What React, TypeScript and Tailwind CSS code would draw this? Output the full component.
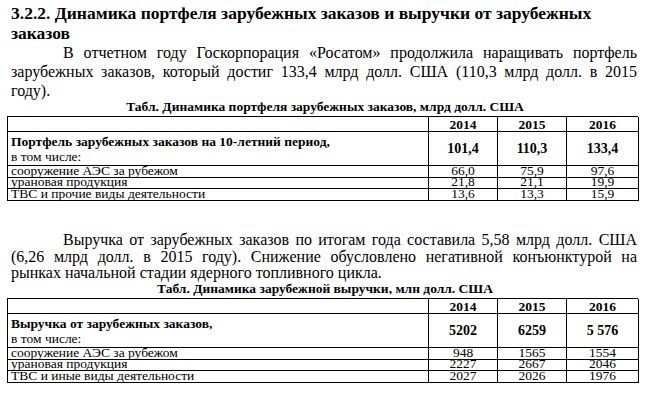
import React from "react";

interface Row {
  label: string;
  values: string[];
}

interface TableData {
  caption: string;
  total: { label: string; values: string[] };
  rows: Row[];
}

const years = ["2014", "2015", "2016"];

const portfolio: TableData = {
  caption: "Табл. Динамика портфеля зарубежных заказов, млрд долл. США",
  total: {
    label: "Портфель зарубежных заказов на 10-летний период,",
    values: ["101,4", "110,3", "133,4"],
  },
  rows: [
    { label: "сооружение АЭС за рубежом", values: ["66,0", "75,9", "97,6"] },
    { label: "урановая продукция", values: ["21,8", "21,1", "19,9"] },
    { label: "ТВС и прочие виды деятельности", values: ["13,6", "13,3", "15,9"] },
  ],
};

const revenue: TableData = {
  caption: "Табл. Динамика зарубежной выручки, млн долл. США",
  total: {
    label: "Выручка от зарубежных заказов,",
    values: ["5202", "6259", "5 576"],
  },
  rows: [
    { label: "сооружение АЭС за рубежом", values: ["948", "1565", "1554"] },
    { label: "урановая продукция", values: ["2227", "2667", "2046"] },
    { label: "ТВС и иные виды деятельности", values: ["2027", "2026", "1976"] },
  ],
};

// heights of the three small rows, px
const rowHeights = ["h-[12px]", "h-[11px]", "h-[12px]"];

function Line({ children, last, indent }: { children: React.ReactNode; last?: boolean; indent?: boolean }) {
  return (
    <div
      className={
        (last ? "text-left" : "text-justify [text-align-last:justify]") +
        (indent ? " pl-[52px]" : "")
      }
    >
      {children}
    </div>
  );
}

function DataTable({ data }: { data: TableData }) {
  const cell = "border-r border-b border-black flex items-center justify-center";
  return (
    <div>
      <div className="text-center font-bold text-[13.5px] leading-[14px] pl-[2px]">{data.caption}</div>
      <div className="ml-[-4px] mt-[2px] w-[631px] grid grid-cols-[421px_69px_69px_72px] border-t border-l border-black text-[13.5px]">
        <div className="border-r border-b border-black h-[15px]" />
        {years.map((y) => (
          <div key={y} className={cell + " h-[15px] pt-[1px] font-bold leading-[14px]"}>
            {y}
          </div>
        ))}

        <div className="border-r border-b border-black h-[34px] pl-[3px] flex flex-col justify-center leading-[15px]">
          <span className="font-bold">{data.total.label}</span>
          <span>в том числе:</span>
        </div>
        {data.total.values.map((v, i) => (
          <div key={i} className={cell + " h-[34px] font-bold text-[14px]"}>
            {v}
          </div>
        ))}

        {data.rows.map((r, ri) => (
          <React.Fragment key={r.label}>
            <div className={"border-r border-b border-black pl-[3px] pb-[3px] flex items-center leading-[11px] " + rowHeights[ri]}>
              {r.label}
            </div>
            {r.values.map((v, i) => (
              <div key={i} className={cell + " pb-[3px] leading-[11px] " + rowHeights[ri]}>
                {v}
              </div>
            ))}
          </React.Fragment>
        ))}
      </div>
    </div>
  );
}

export default function App() {
  return (
    <div className="w-[652px] h-[406px] bg-white text-black [font-family:'Liberation_Serif','Times_New_Roman',serif] pl-[11px] pr-[15px] pt-[3px] overflow-hidden">
      <h3 className="font-bold text-[17.5px] leading-[20px]">
        3.2.2. Динамика портфеля зарубежных заказов и выручки от зарубежных
        <br />
        заказов
      </h3>

      <div className="text-[16px] leading-[19px]">
        <Line indent>В отчетном году Госкорпорация «Росатом» продолжила наращивать портфель</Line>
        <Line>зарубежных заказов, который достиг 133,4 млрд долл. США (110,3 млрд долл. в 2015</Line>
        <Line last>году).</Line>
      </div>

      <DataTable data={portfolio} />

      <div className="mt-[31px] text-[16px] leading-[16.7px]">
        <Line indent>Выручка от зарубежных заказов по итогам года составила 5,58 млрд долл. США</Line>
        <Line>(6,26 млрд долл. в 2015 году). Снижение обусловлено негативной конъюнктурой на</Line>
        <Line last>рынках начальной стадии ядерного топливного цикла.</Line>
      </div>

      <DataTable data={revenue} />
    </div>
  );
}
